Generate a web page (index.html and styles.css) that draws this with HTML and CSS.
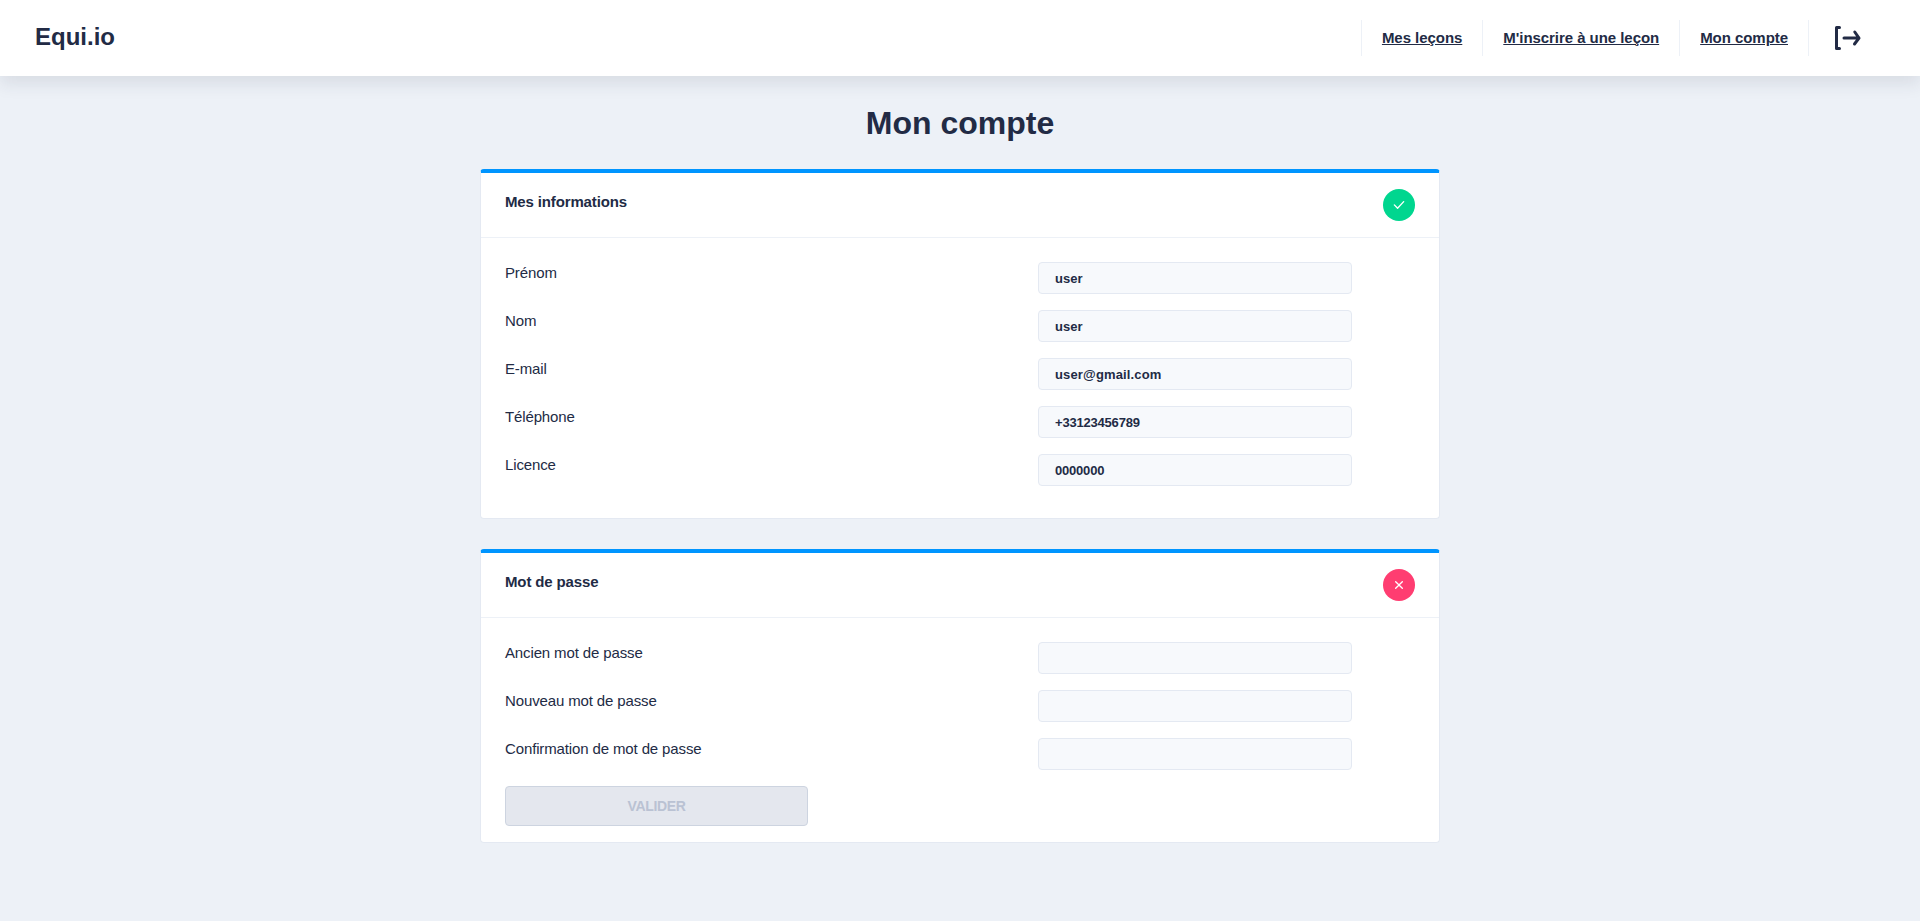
FILE: index.html
```html
<!DOCTYPE html>
<html lang="fr">
<head>
<meta charset="utf-8">
<title>Equi.io</title>
<link rel="stylesheet" href="styles.css">
</head>
<body>
<header class="header">
  <div class="logo">Equi.io</div>
  <nav class="nav">
    <a class="nav-link" href="#">Mes leçons</a>
    <a class="nav-link" href="#">M'inscrire à une leçon</a>
    <a class="nav-link" href="#">Mon compte</a>
    <a class="logout" href="#" aria-label="Déconnexion">
      <svg width="36" height="36" viewBox="0 0 24 24" fill="#222b45"><path d="M7 6a1 1 0 0 0 0-2H5a1 1 0 0 0-1 1v14a1 1 0 0 0 1 1h2a1 1 0 0 0 0-2H6V6z"/><path d="M20.82 11.42l-2.82-4a1 1 0 0 0-1.39-.24 1 1 0 0 0-.24 1.4L18.09 11H10a1 1 0 0 0 0 2h8l-1.8 2.4a1 1 0 0 0 .2 1.4 1 1 0 0 0 .6.2 1 1 0 0 0 .8-.4l3-4a1 1 0 0 0 .02-1.18z"/></svg>
    </a>
  </nav>
</header>
<main class="main">
  <h1 class="title">Mon compte</h1>
  <section class="card card-info">
    <div class="card-header">
      <h2 class="card-title">Mes informations</h2>
      <span class="status status-ok"><svg width="16" height="16" viewBox="0 0 24 24" fill="#fff"><path d="M9.86 18a1 1 0 0 1-.73-.32l-4.86-5.17a1 1 0 1 1 1.46-1.37l4.12 4.39 8.41-9.2a1 1 0 1 1 1.48 1.34l-9.14 10a1 1 0 0 1-.73.33z"/></svg></span>
    </div>
    <div class="card-body">
      <div class="row"><label class="label" for="prenom">Prénom</label><input class="input" id="prenom" value="user"></div>
      <div class="row"><label class="label" for="nom">Nom</label><input class="input" id="nom" value="user"></div>
      <div class="row"><label class="label" for="email">E-mail</label><input class="input input-email" id="email" value="user@gmail.com"></div>
      <div class="row"><label class="label" for="tel">Téléphone</label><input class="input input-number" id="tel" value="+33123456789"></div>
      <div class="row"><label class="label" for="licence">Licence</label><input class="input input-number" id="licence" value="0000000"></div>
    </div>
  </section>
  <section class="card card-password">
    <div class="card-header">
      <h2 class="card-title">Mot de passe</h2>
      <span class="status status-ko"><svg width="16" height="16" viewBox="0 0 24 24" fill="#fff"><path d="M13.41 12l4.3-4.29a1 1 0 1 0-1.42-1.42L12 10.59l-4.29-4.3a1 1 0 0 0-1.42 1.42l4.3 4.29-4.3 4.29a1 1 0 0 0 0 1.42 1 1 0 0 0 1.42 0l4.29-4.3 4.29 4.3a1 1 0 0 0 1.42 0 1 1 0 0 0 0-1.42z"/></svg></span>
    </div>
    <div class="card-body">
      <div class="row"><label class="label" for="old">Ancien mot de passe</label><input class="input" id="old" type="password"></div>
      <div class="row"><label class="label" for="new">Nouveau mot de passe</label><input class="input" id="new" type="password"></div>
      <div class="row"><label class="label" for="confirm">Confirmation de mot de passe</label><input class="input" id="confirm" type="password"></div>
      <button class="submit" disabled>VALIDER</button>
    </div>
  </section>
</main>
</body>
</html>
```
FILE: styles.css
```css
* { box-sizing: border-box; }
body {
  margin: 0;
  min-height: 100vh;
  background: #edf1f7;
  color: #222b45;
  font-family: "Liberation Sans", Arial, sans-serif;
  font-size: 15px;
  line-height: 20px;
}
.header {
  display: flex;
  align-items: center;
  justify-content: space-between;
  height: 76px;
  padding: 0 55px 0 35px;
  background: #fff;
  box-shadow: 0 8px 16px 0 rgba(44, 51, 73, 0.1);
}
.logo { font-size: 24px; font-weight: 700; line-height: 32px; padding-bottom: 2px; }
.nav { display: flex; align-items: center; }
.nav-link {
  height: 36px;
  padding: 0 20px;
  border-left: 1px solid #edf1f7;
  color: inherit;
  font-size: 15px;
  font-weight: 700;
  letter-spacing: -0.05px;
  line-height: 36px;
  text-decoration: underline;
}
.logout { display: flex; height: 36px; padding-left: 20px; border-left: 1px solid #edf1f7; }
.main { width: 960px; margin: 0 auto; }
.title { margin: 0; padding: 27px 0 26px; font-size: 32px; line-height: 40px; text-align: center; }
.card {
  margin-bottom: 30px;
  background: #fff;
  border: 1px solid #e4e9f2;
  border-top: 4px solid #0095ff;
  border-radius: 4px;
}
.card-header {
  display: flex;
  justify-content: space-between;
  padding: 16px 24px;
  border-bottom: 1px solid #edf1f7;
}
.card-title { margin: 0; font-size: 15px; line-height: 26px; letter-spacing: -0.14px; }
.status {
  display: flex;
  align-items: center;
  justify-content: center;
  width: 32px;
  height: 32px;
  border-radius: 50%;
}
.status-ok { background: #00d68f; }
.status-ko { background: #ff3d71; }
.card-body { display: flex; flex-direction: column; gap: 16px; padding: 24px 24px 32px; }
.card-password .card-body { padding-bottom: 16px; }
.row { display: flex; height: 32px; }
.label { width: 533px; line-height: 22px; letter-spacing: -0.13px; }
.input {
  width: 314px;
  height: 32px;
  padding: 0 16px;
  background: #f7f9fc;
  border: 1px solid #e4e9f2;
  border-radius: 4px;
  color: inherit;
  font: 700 13px "Liberation Sans", Arial, sans-serif;
}
.input-email { letter-spacing: 0.15px; }
.input-number { letter-spacing: -0.2px; }
.submit {
  width: 303px;
  height: 40px;
  padding: 0;
  background: #e4e7ee;
  border: 1px solid #cdd4e0;
  border-radius: 4px;
  color: #bac2d3;
  font: 700 14px "Liberation Sans", Arial, sans-serif;
  letter-spacing: -0.35px;
}
```
